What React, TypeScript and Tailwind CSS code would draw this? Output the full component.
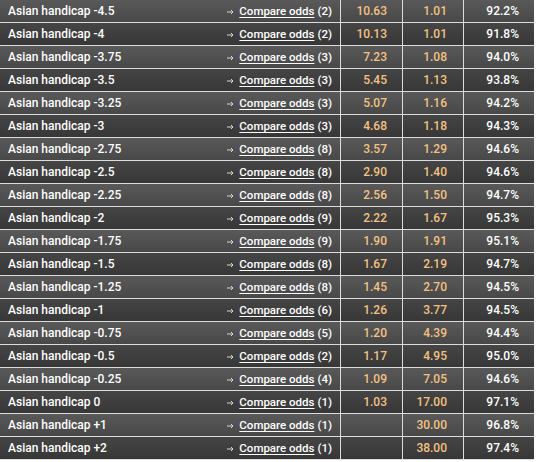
import React from "react";

type Line = { label: string; count: number; home?: string; away: string; payout: string };

const lines: Line[] = [
  { label: "Asian handicap -4.5", count: 2, home: "10.63", away: "1.01", payout: "92.2%" },
  { label: "Asian handicap -4", count: 2, home: "10.13", away: "1.01", payout: "91.8%" },
  { label: "Asian handicap -3.75", count: 3, home: "7.23", away: "1.08", payout: "94.0%" },
  { label: "Asian handicap -3.5", count: 3, home: "5.45", away: "1.13", payout: "93.8%" },
  { label: "Asian handicap -3.25", count: 3, home: "5.07", away: "1.16", payout: "94.2%" },
  { label: "Asian handicap -3", count: 3, home: "4.68", away: "1.18", payout: "94.3%" },
  { label: "Asian handicap -2.75", count: 8, home: "3.57", away: "1.29", payout: "94.6%" },
  { label: "Asian handicap -2.5", count: 8, home: "2.90", away: "1.40", payout: "94.6%" },
  { label: "Asian handicap -2.25", count: 8, home: "2.56", away: "1.50", payout: "94.7%" },
  { label: "Asian handicap -2", count: 9, home: "2.22", away: "1.67", payout: "95.3%" },
  { label: "Asian handicap -1.75", count: 9, home: "1.90", away: "1.91", payout: "95.1%" },
  { label: "Asian handicap -1.5", count: 8, home: "1.67", away: "2.19", payout: "94.7%" },
  { label: "Asian handicap -1.25", count: 8, home: "1.45", away: "2.70", payout: "94.5%" },
  { label: "Asian handicap -1", count: 6, home: "1.26", away: "3.77", payout: "94.5%" },
  { label: "Asian handicap -0.75", count: 5, home: "1.20", away: "4.39", payout: "94.4%" },
  { label: "Asian handicap -0.5", count: 2, home: "1.17", away: "4.95", payout: "95.0%" },
  { label: "Asian handicap -0.25", count: 4, home: "1.09", away: "7.05", payout: "94.6%" },
  { label: "Asian handicap 0", count: 1, home: "1.03", away: "17.00", payout: "97.1%" },
  { label: "Asian handicap +1", count: 1, away: "30.00", payout: "96.8%" },
  { label: "Asian handicap +2", count: 1, away: "38.00", payout: "97.4%" },
];

function Arrow() {
  return (
    <svg width="7" height="6" viewBox="0 0 7 6" className="mr-[5px] mt-px" fill="none" stroke="#d6d6d6" strokeWidth="1">
      <path d="M0 3h6M4 1l2 2-2 2" />
    </svg>
  );
}

function Row({ line, odd }: { line: Line; odd: boolean }) {
  const bg = odd
    ? "bg-gradient-to-b from-[#595959] to-[#484848]"
    : "bg-gradient-to-b from-[#454545] to-[#373737]";
  return (
    <div className="grid grid-cols-[340px_61px_60px_70px] gap-x-px h-[22px] text-[12px] font-medium leading-[22px]">
      <div className={`${bg} flex justify-between pl-2 pr-2 text-white`}>
        <span>{line.label}</span>
        <span className="flex items-center text-[11.5px]">
          <Arrow />
          <a href="#" className="underline underline-offset-2 text-white">
            Compare odds
          </a>
          <span className="ml-[3px]">({line.count})</span>
        </span>
      </div>
      <div className={`${bg} text-right pr-[15px] text-[#f3c283]`}>{line.home ?? ""}</div>
      <div className={`${bg} text-right pr-[16px] text-[#f3c283]`}>{line.away}</div>
      <div className={`${bg} text-right pr-[15px] text-white`}>{line.payout}</div>
    </div>
  );
}

export default function App() {
  return (
    <div className="w-[537px] h-[462px] bg-white" style={{ fontFamily: "Roboto, 'Liberation Sans', sans-serif" }}>
      <div className="w-[534px] flex flex-col gap-px bg-[#dcdcdc] pb-px">
        {lines.map((line, i) => (
          <Row key={line.label} line={line} odd={i % 2 === 0} />
        ))}
      </div>
    </div>
  );
}
